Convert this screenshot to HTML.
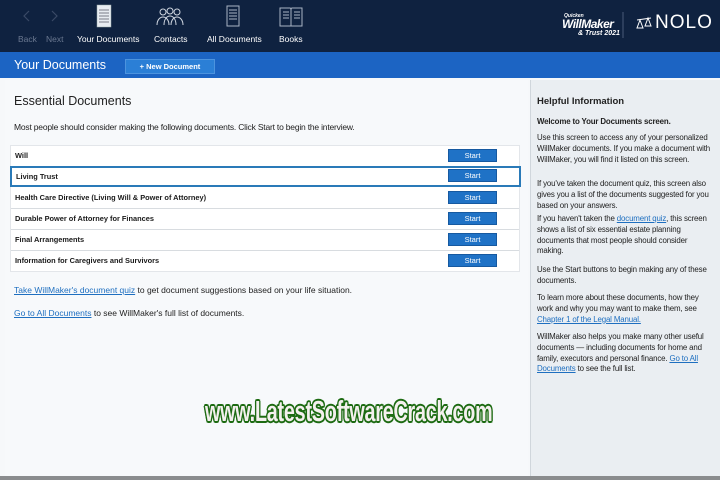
<!DOCTYPE html>
<html><head><style>
*{margin:0;padding:0;box-sizing:border-box}
body{width:720px;height:480px;overflow:hidden;font-family:"Liberation Sans",sans-serif;background:#f6f8fa;position:relative;color:#1a1a1a}
.top{position:absolute;left:0;top:0;width:720px;height:52px;background:#0f2240}
.nav{position:absolute;top:34px;font-size:8.5px;color:#fff}
.nav.dim{color:#6a7890}
.bar{position:absolute;left:0;top:52px;width:720px;height:26px;background:#1c64c3}
.bar .t{position:absolute;left:14px;top:6px;color:#fff;font-size:12.5px}
.nd{position:absolute;left:125px;top:59px;width:90px;height:15px;background:#2b7fd6;border:1px solid #4c93de;color:#fff;font-size:7.5px;font-weight:bold;text-align:center;line-height:13px}
.left{position:absolute;left:5px;top:80px;width:523px;height:396px;background:#f7f9fb}
.right{position:absolute;left:530px;top:80px;width:190px;height:396px;background:#eaeef2;border-left:1px solid #d0d6dc}
h1{position:absolute;left:14px;top:94px;font-size:12.5px;font-weight:normal;color:#222}
.p{position:absolute;font-size:8.5px;color:#222;white-space:nowrap}
.list{position:absolute;left:10px;top:145px;width:510px;height:127px;background:#fff;border:1px solid #e3e6ea}
.row{position:absolute;left:0;width:508px;height:21px;border-bottom:1px solid #d8dce0;font-size:7.4px;font-weight:bold;padding-left:4px;line-height:20px}
.row.sel{border:2px solid #2a7ab8;left:-1px;width:511px;line-height:17px}
.st{position:absolute;left:437px;top:3px;width:49px;height:13px;background:#1f72c6;border:1px solid #1659a0;color:#fff;font-size:7.5px;text-align:center;line-height:11px;font-weight:normal}
.sel .st{top:1px;left:436px}
a{color:#1e6fc0;text-decoration:underline}
.ri{position:absolute;left:537px;font-size:7.9px;line-height:10.8px;color:#222;white-space:nowrap;letter-spacing:-0.15px}
.wm{position:absolute;left:205px;top:396px;font-family:"Liberation Sans",sans-serif;font-weight:bold;font-size:29px;color:#f4f0ee;letter-spacing:-0.3px;transform:scaleX(0.68);transform-origin:0 0;white-space:nowrap;text-shadow:2px 0 #1d6b12,-2px 0 #1d6b12,0 2px #1d6b12,0 -2px #1d6b12,1.5px 1.5px #1d6b12,-1.5px 1.5px #1d6b12,1.5px -1.5px #1d6b12,-1.5px -1.5px #1d6b12}
.bot{position:absolute;left:0;top:476px;width:720px;height:4px;background:#8a8c8e}
</style></head><body>
<div class="top">
<svg width="720" height="52" style="position:absolute;left:0;top:0">
<g stroke="#3a4a66" fill="none" stroke-width="1.2"><path d="M29 11l-5 5 5 5"/><path d="M52 11l5 5-5 5"/></g>
<rect x="97" y="5" width="14" height="22" fill="#e8ecf2" stroke="#9aa" stroke-width=".5"/>
<g stroke="#556" stroke-width=".8"><path d="M99 10h10M99 13h10M99 16h10M99 19h10M99 22h10"/></g>
<g stroke="#cfd6e0" fill="none" stroke-width="1"><circle cx="163" cy="12" r="3"/><circle cx="170" cy="11" r="3"/><circle cx="177" cy="12" r="3"/><path d="M157 25c0-5 3-8 6-8s6 3 6 8M164 25c0-6 3-9 6-9s6 3 6 9M171 25c0-5 3-8 6-8s6 3 6 8"/></g>
<g stroke="#aab4c4" fill="none" stroke-width="1"><rect x="227" y="6" width="12" height="20"/><path d="M229 10h8M229 13h8M229 16h8M229 19h8"/></g>
<g stroke="#aab4c4" fill="none" stroke-width="1"><path d="M280 8h10c1 0 1 1 1 2v16h-11zM302 8h-10c-1 0-1 1-1 2v16h11z"/><path d="M283 12h6M283 15h6M283 18h6M294 12h6M294 15h6M294 18h6"/></g>
<line x1="623" y1="12" x2="623" y2="38" stroke="#4a5a78"/>
<g stroke="#fff" fill="none" stroke-width="1"><path d="M637 20l14-2M640 20l-3 8h6zM648 18l-3 8h6z"/></g>
</svg>
<div class="nav dim" style="left:18px">Back</div>
<div class="nav dim" style="left:46px">Next</div>
<div class="nav" style="left:77px">Your Documents</div>
<div class="nav" style="left:154px">Contacts</div>
<div class="nav" style="left:207px">All Documents</div>
<div class="nav" style="left:279px">Books</div>
<div style="position:absolute;left:564px;top:13px;color:#fff;font-size:5px;font-weight:bold;font-style:italic">Quicken</div>
<div style="position:absolute;left:562px;top:17px;color:#fff;font-size:12px;font-weight:bold;font-style:italic;letter-spacing:-0.5px">WillMaker</div>
<div style="position:absolute;left:578px;top:30px;color:#fff;font-size:7px;font-weight:bold;font-style:italic">&amp; Trust 2021</div>
<div style="position:absolute;left:655px;top:12px;color:#fff;font-size:19px;letter-spacing:1px">NOLO</div>
</div>
<div class="bar"><div class="t">Your Documents</div></div>
<div class="nd">+ New Document</div>
<div class="left"></div>
<div class="right"></div>
<h1>Essential Documents</h1>
<div class="p" style="left:14px;top:122px;letter-spacing:-0.2px">Most people should consider making the following documents. Click Start to begin the interview.</div>
<div class="list">
<div class="row" style="top:0">Will<div class="st">Start</div></div>
<div class="row sel" style="top:20px">Living Trust<div class="st">Start</div></div>
<div class="row" style="top:42px">Health Care Directive (Living Will &amp; Power of Attorney)<div class="st">Start</div></div>
<div class="row" style="top:63px">Durable Power of Attorney for Finances<div class="st">Start</div></div>
<div class="row" style="top:84px">Final Arrangements<div class="st">Start</div></div>
<div class="row" style="top:105px;border-bottom:none">Information for Caregivers and Survivors<div class="st">Start</div></div>
</div>
<div class="p" style="left:14px;top:285px"><a>Take WillMaker's document quiz</a> to get document suggestions based on your life situation.</div>
<div class="p" style="left:14px;top:308px"><a>Go to All Documents</a> to see WillMaker's full list of documents.</div>
<div style="position:absolute;left:537px;top:96px;font-size:9.5px;font-weight:bold;color:#222">Helpful Information</div>
<div class="ri" style="top:117px;font-weight:bold">Welcome to Your Documents screen.</div>
<div class="ri" style="top:133px">Use this screen to access any of your personalized<br>WillMaker documents. If you make a document with<br>WillMaker, you will find it listed on this screen.</div>
<div class="ri" style="top:179px">If you've taken the document quiz, this screen also<br>gives you a list of the documents suggested for you<br>based on your answers.</div>
<div class="ri" style="top:214px">If you haven't taken the <a>document quiz</a>, this screen<br>shows a list of six essential estate planning<br>documents that most people should consider<br>making.</div>
<div class="ri" style="top:265px">Use the Start buttons to begin making any of these<br>documents.</div>
<div class="ri" style="top:293px">To learn more about these documents, how they<br>work and why you may want to make them, see<br><a>Chapter 1 of the Legal Manual.</a></div>
<div class="ri" style="top:332px">WillMaker also helps you make many other useful<br>documents — including documents for home and<br>family, executors and personal finance. <a>Go to All</a><br><a>Documents</a> to see the full list.</div>
<div class="wm">www.LatestSoftwareCrack.com</div>
<div class="bot"></div>
</body></html>
